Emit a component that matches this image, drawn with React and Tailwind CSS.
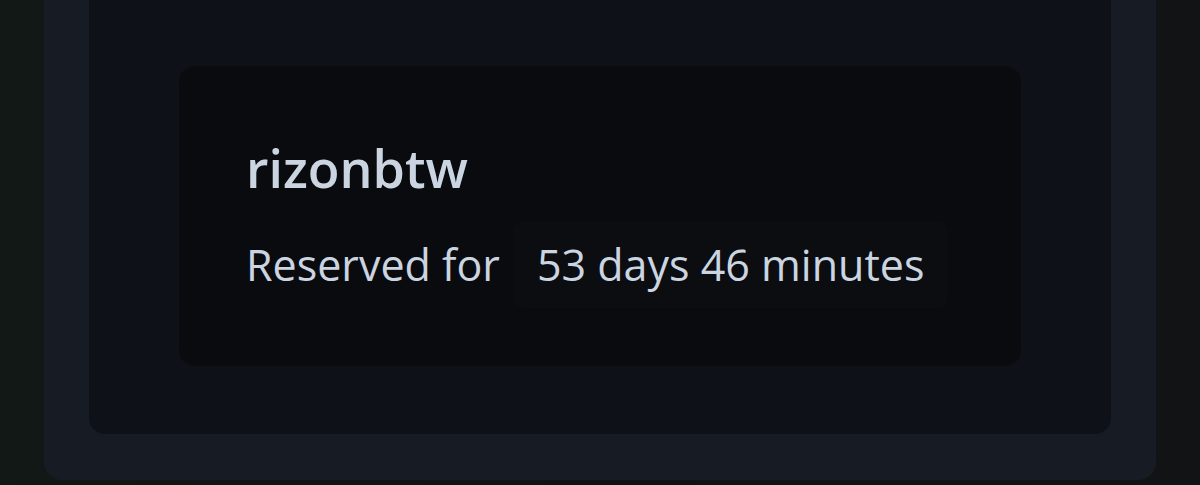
export default function App() {
  return (
    <div
      className="min-h-[485px] w-full bg-gradient-to-r from-[#121816] via-[#101214] to-[#111314] px-[44px] pb-[5px]"
      style={{ fontFamily: '"Open Sans", "Noto Sans", sans-serif' }}
    >
      <div className="rounded-b-[18px] bg-[#171c24] px-[45px] pb-[46px]">
        <div className="rounded-b-[16px] bg-[#0e1117] px-[90px] pt-[66px] pb-[68px]">
          <div className="flex h-[300px] flex-col rounded-[16px] bg-[#0a0b0e] pl-[67px] pt-[76px]">
            <h2 className="text-[52px] font-semibold leading-[52px] text-[#cbd5e1]">rizonbtw</h2>
            <div className="mt-[27px] flex items-center gap-[13px] text-[43px] leading-none text-[#cbd5e1]">
              <span>Reserved for</span>
              <span className="flex h-[87px] items-center rounded-[10px] bg-[#0c0d10] px-[24px]">
                53 days 46 minutes
              </span>
            </div>
          </div>
        </div>
      </div>
    </div>
  );
}
